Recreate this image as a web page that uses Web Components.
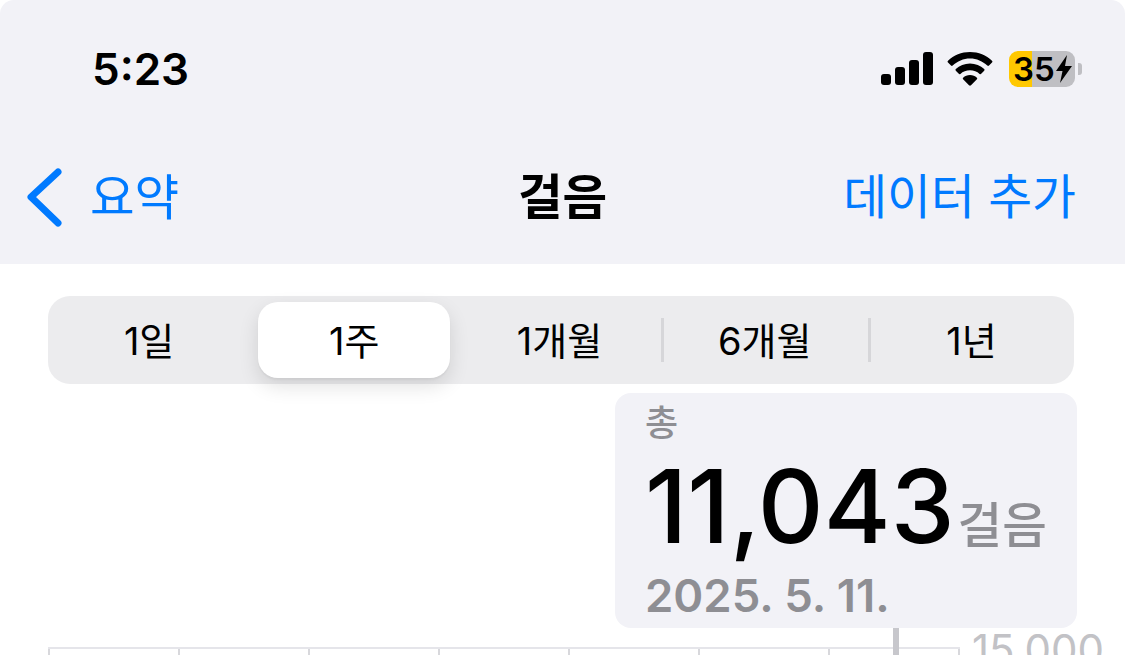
<!DOCTYPE html>
<html lang="ko">
<head>
<meta charset="utf-8">
<style>
  html, body { margin: 0; height: 655px; overflow: hidden; background: #fff; }
  body { font-family: Inter, "Noto Sans CJK KR", sans-serif; }
</style>
</head>
<body>
<steps-page></steps-page>

<script>
class StatusBar extends HTMLElement {
  constructor() {
    super();
    this.attachShadow({ mode: 'open' });
    this.shadowRoot.innerHTML = `
      <style>
        :host { display: flex; align-items: center; justify-content: space-between; height: 138px; padding: 0 43px 0 92px; box-sizing: border-box; color: #000; }
        .time { font-size: 44px; font-weight: 600; line-height: 1; }
        .icons { display: flex; align-items: center; gap: 14px; }
        svg { display: block; }
        .battery { display: flex; align-items: center; width: 66px; height: 36px; margin-left: 2px; padding-left: 4px; box-sizing: border-box; border-radius: 9px; background: linear-gradient(90deg, #ffc800 23px, #bfbfc3 23px); font-size: 33px; font-weight: 600; line-height: 1; }
        .nub { width: 4px; height: 12px; background: #bfbfc3; border-radius: 0 3px 3px 0; }
        .wrap { display: flex; align-items: center; gap: 3px; }
      </style>
      <div class="time">5:23</div>
      <div class="icons">
        <svg width="52" height="34" viewBox="0 0 52 34" fill="#000">
          <rect x="0" y="22" width="10" height="11" rx="3"/>
          <rect x="14" y="15" width="10" height="18" rx="3"/>
          <rect x="28" y="8" width="10" height="25" rx="3"/>
          <rect x="42" y="0" width="10" height="33" rx="3"/>
        </svg>
        <svg width="46" height="34" viewBox="0 0 46 34" fill="#000">
          <path d="M23 0C14.500 0 6.700 3.300 1 8.800c-.6.600-.6 1.200 0 1.800l3 3c.5.500 1.100.5 1.700 0C10.300 9.200 16.400 6.500 23 6.500s12.700 2.700 17.300 7.100c.6.500 1.200.5 1.700 0l3-3c.6-.6.600-1.200 0-1.800C39.300 3.300 31.500 0 23 0z"/>
          <path d="M23 11.500c-5.500 0-10.500 2.100-14.200 5.600-.5.500-.5 1.100 0 1.600l3 3.100c.5.500 1 .5 1.600.1 2.500-2.200 5.900-3.600 9.600-3.600s7.100 1.400 9.600 3.600c.6.400 1.100.4 1.600-.1l3-3.100c.5-.5.500-1.100 0-1.600-3.700-3.500-8.700-5.600-14.200-5.600z"/>
          <path d="M23 23c-2.700 0-5.100 1-6.900 2.700-.5.500-.5 1 0 1.500l5.900 6c.6.600 1.400.6 2 0l5.900-6c.5-.5.500-1 0-1.500C28.100 24 25.700 23 23 23z"/>
        </svg>
        <div class="wrap">
          <div class="battery">35<svg width="18" height="30" viewBox="0 0 18 30" fill="#000"><path d="M12 1 1 17h6.500L5 29 17 12h-7z"/></svg></div>
          <div class="nub"></div>
        </div>
      </div>`;
  }
}

class NavBar extends HTMLElement {
  constructor() {
    super();
    this.attachShadow({ mode: 'open' });
    this.shadowRoot.innerHTML = `
      <style>
        :host { display: grid; grid-template-columns: 1fr auto 1fr; align-items: center; height: 126px; padding: 0 49px 6px 49px; box-sizing: border-box; font-size: 48.500px; line-height: 1; }
        .back { display: flex; align-items: center; gap: 26px; margin-left: -23px; color: #007aff; }
        .title { font-weight: 700; color: #000; }
        .action { justify-self: end; font-size: 47.700px; color: #007aff; }
        svg { display: block; }
      </style>
      <div class="back">
        <svg width="38" height="60" viewBox="0 0 38 60" fill="none" stroke="#007aff" stroke-width="7" stroke-linecap="round" stroke-linejoin="round"><path d="M32 4 5 29l27 26"/></svg>
        <span><slot name="back"></slot></span>
      </div>
      <div class="title"><slot name="title"></slot></div>
      <div class="action"><slot name="action"></slot></div>`;
  }
}

class RangePicker extends HTMLElement {
  constructor() {
    super();
    this.attachShadow({ mode: 'open' });
    this.shadowRoot.innerHTML = `
      <style>
        :host { display: grid; grid-template-columns: repeat(5, 1fr); height: 88px; margin: 32px 51px 0 48px; border-radius: 22px; background: #ececee; font-size: 38px; font-weight: 400; color: #000; }
        .item { position: relative; display: flex; align-items: center; justify-content: center; padding: 0 3px 4px 0; }
        .item:last-child { padding-right: 0; }
        .item.on::before { content: ""; position: absolute; inset: 6px 8px 6px 5px; border-radius: 20px; background: #fff; box-shadow: 0 8px 20px rgba(0,0,0,.12), 0 2px 2px rgba(0,0,0,.04); }
        .item span { position: relative; }
        .item.sep::after { content: ""; position: absolute; right: 0; top: 22px; bottom: 22px; width: 3px; background: #d6d6d9; }
        .item.sep + .item.sep::after { right: -2px; }
      </style>
      <div class="item"><span>1일</span></div>
      <div class="item on"><span>1주</span></div>
      <div class="item sep"><span>1개월</span></div>
      <div class="item sep"><span>6개월</span></div>
      <div class="item"><span>1년</span></div>`;
  }
}

class StepCard extends HTMLElement {
  constructor() {
    super();
    this.attachShadow({ mode: 'open' });
    this.shadowRoot.innerHTML = `
      <style>
        :host { position: absolute; left: 615px; top: 393px; width: 462px; height: 235px; padding: 10px 0 0 30px; box-sizing: border-box; border-radius: 16px; background: #f2f2f7; display: flex; flex-direction: column; }
        .label { font-size: 36px; font-weight: 500; line-height: 40px; color: #8e8e93; }
        .total { display: flex; align-items: baseline; gap: 3px; height: 120px; margin-top: 3px; line-height: 120px; font-size: 102px; font-weight: 500; color: #000; }
        .unit { font-size: 48.500px; font-weight: 500; color: #8e8e93; }
        .date { margin-top: 5px; font-size: 45.500px; font-weight: 560; line-height: 50px; color: #8e8e93; }
      </style>
      <div class="label">총</div>
      <div class="total">11,043<span class="unit">걸음</span></div>
      <div class="date">2025. 5. 11.</div>`;
  }
}

class StepChart extends HTMLElement {
  constructor() {
    super();
    this.attachShadow({ mode: 'open' });
    const ticks = Array.from({ length: 8 }, () => '<i></i>').join('');
    this.shadowRoot.innerHTML = `
      <style>
        :host { display: flex; align-items: flex-start; gap: 12px; margin: 263px 0 0 48px; height: 60px; position: relative; }
        .plot { display: flex; justify-content: space-between; width: 912px; height: 40px; border-top: 2px solid #e5e5ea; box-sizing: border-box; }
        i { display: block; width: 2px; height: 40px; background: #d8d8dc; }
        .axis { margin-top: -22px; font-size: 42px; line-height: 50px; color: #c2c2c6; }
        .marker { position: absolute; left: 845px; top: -20px; width: 6px; height: 60px; background: #c7c7cc; }
      </style>
      <div class="plot">${ticks}</div>
      <div class="axis">15,000</div>
      <div class="marker"></div>`;
  }
}

class StepsPage extends HTMLElement {
  constructor() {
    super();
    this.attachShadow({ mode: 'open' });
    this.shadowRoot.innerHTML = `
      <style>
        :host { display: block; position: relative; width: 1125px; height: 655px; overflow: hidden; }
        header { background: #f2f2f7; height: 264px; border-radius: 14px 14px 0 0; }
      </style>
      <header>
        <status-bar></status-bar>
        <nav-bar>
          <span slot="back">요약</span>
          <span slot="title">걸음</span>
          <span slot="action">데이터 추가</span>
        </nav-bar>
      </header>
      <range-picker></range-picker>
      <step-chart></step-chart>
      <step-card></step-card>`;
  }
}

customElements.define('status-bar', StatusBar);
customElements.define('nav-bar', NavBar);
customElements.define('range-picker', RangePicker);
customElements.define('step-card', StepCard);
customElements.define('step-chart', StepChart);
customElements.define('steps-page', StepsPage);
</script>
</body>
</html>
